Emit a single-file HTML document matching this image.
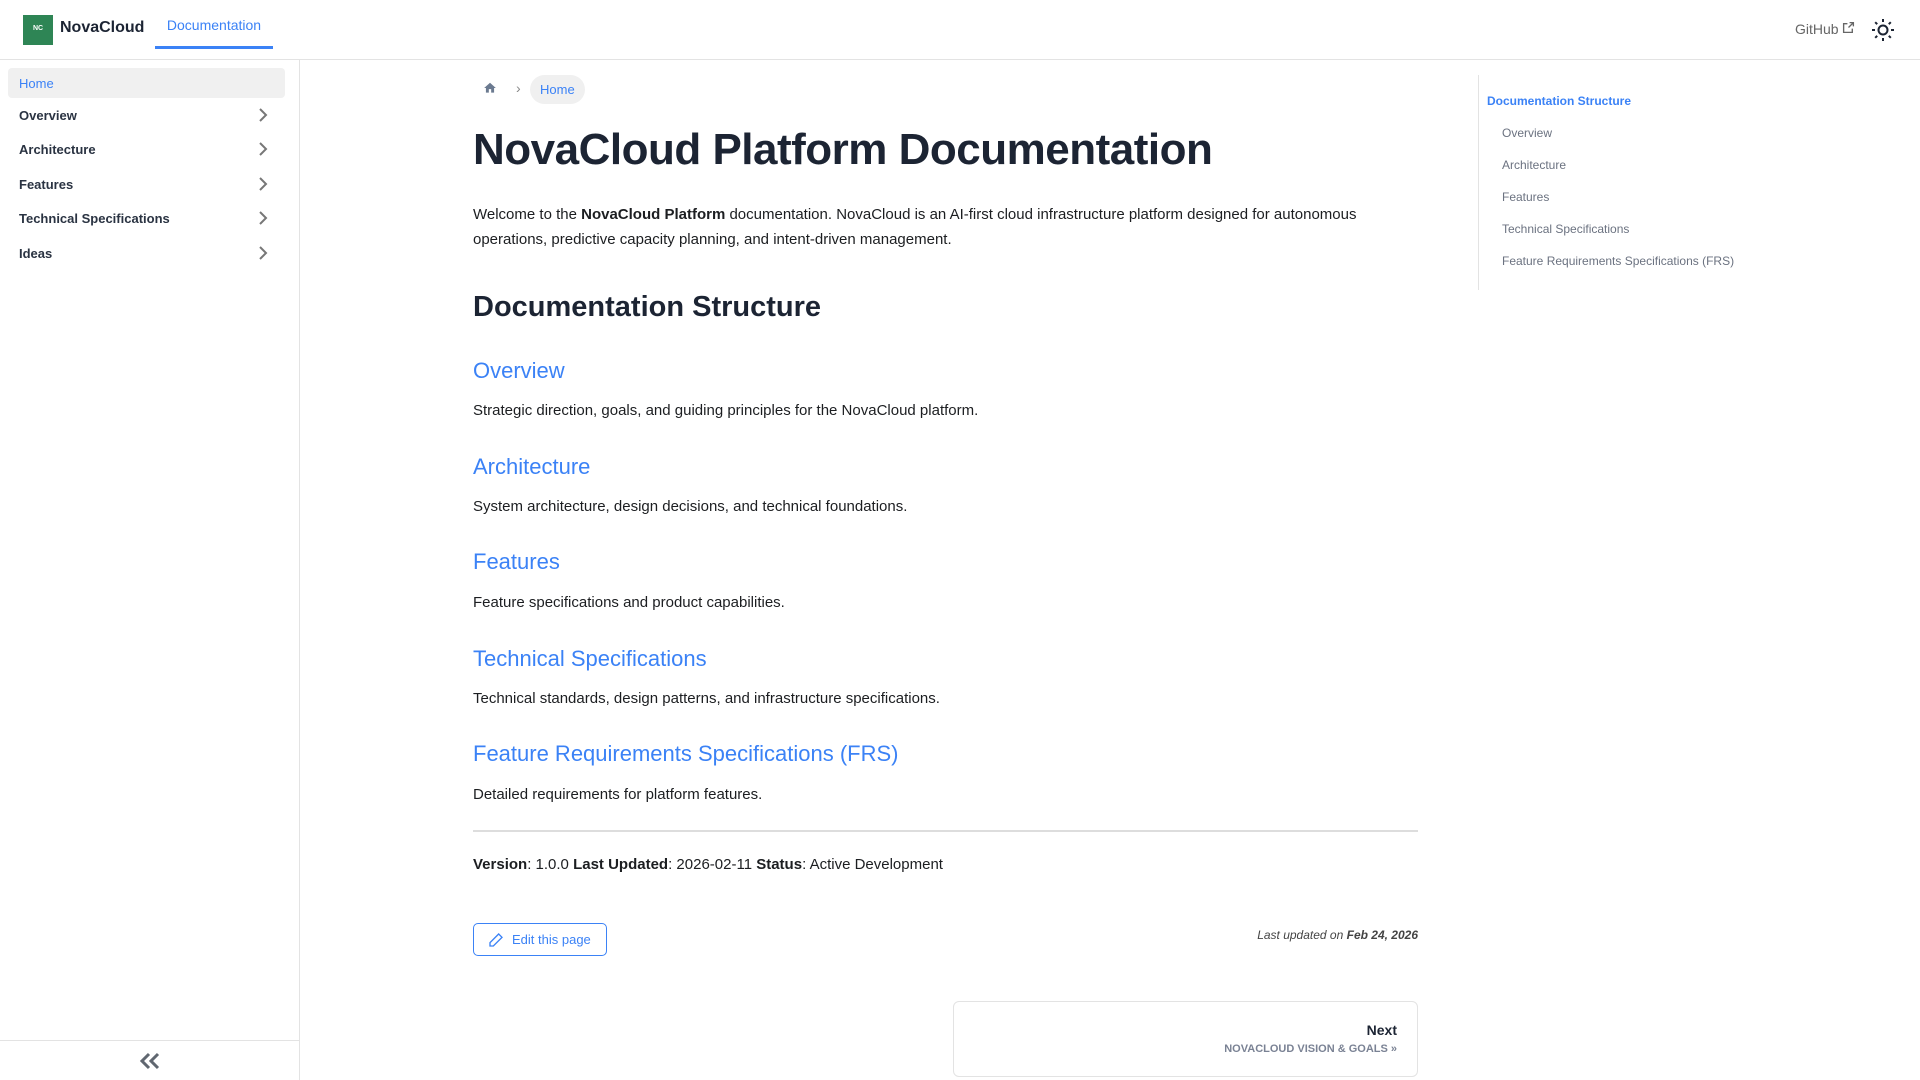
<!DOCTYPE html>
<html><head><meta charset="utf-8"><style>
*{box-sizing:border-box;margin:0;padding:0}
body{width:1920px;height:1080px;overflow:hidden;background:#fff;font-family:"Liberation Sans",sans-serif;color:#1c1e21;position:relative}
.hdr{position:absolute;left:0;top:0;width:1920px;height:60px;border-bottom:1px solid #e3e3e3}
.logo{position:absolute;left:23px;top:15px;width:30px;height:30px;background:#2e8555;color:#fff;font-size:7px;font-weight:bold;text-align:center;line-height:28px}
.brand{position:absolute;left:60px;top:19px;font-size:16px;font-weight:bold;color:#1c2433}
.tab{position:absolute;left:155px;top:0;width:118px;height:49px;border-bottom:3px solid #3b82f6;color:#3b82f6;font-size:14px;text-align:center;padding-top:17px}
.gh{position:absolute;left:1795px;top:21px;font-size:14px;color:#666}
.side{position:absolute;left:0;top:60px;width:300px;height:1020px;border-right:1px solid #e3e3e3}
.it{position:absolute;left:8px;width:277px;height:30px;font-size:13px;font-weight:bold;color:#2a3342;padding:8px 11px;border-radius:4px}
.it svg{position:absolute;right:14px;top:6px}
.col{position:absolute;left:0;bottom:0;width:300px;height:40px;border-top:1px solid #e3e3e3;border-right:1px solid #e3e3e3}
.m{position:absolute;left:473px;width:945px}
h1{font-size:44px;font-weight:bold;color:#1c2433;letter-spacing:-0.5px}
p{font-size:15px;line-height:25px;color:#1c1e21}
h2{font-size:29px;font-weight:bold;color:#1c2433}
h3{font-size:22px;font-weight:normal;color:#3b82f6}
.toc{position:absolute;left:1478px;top:75px;height:215px;border-left:1px solid #e3e3e3}
.toc div{position:absolute;white-space:nowrap;font-size:12px;color:#6b7280}
</style></head><body>
<div class="hdr">
<div class="logo">NC</div><div class="brand">NovaCloud</div>
<div class="tab">Documentation</div>
<div class="gh">GitHub <svg width="13" height="13" viewBox="0 0 24 24" fill="none" stroke="#666" stroke-width="2.5"><path d="M14 3h7v7M21 3l-9 9M19 14v7H3V5h7"/></svg></div>
<svg style="position:absolute;left:1871px;top:18px" width="24" height="24" viewBox="0 0 24 24" fill="none" stroke="#1c2433" stroke-width="2"><circle cx="12" cy="12" r="4.5"/><path d="M12 1v3M12 20v3M1 12h3M20 12h3M4.2 4.2l2 2M17.8 17.8l2 2M4.2 19.8l2-2M17.8 6.2l2-2"/></svg>
</div>
<div class="side">
<div class="it" style="top:8px;background:#f0f0f0;color:#3b82f6;font-weight:normal">Home</div>
<div class="it" style="top:40px">Overview<svg width="16" height="18" viewBox="0 0 16 18"><path d="M5 3l6 6-6 6" fill="none" stroke="#777" stroke-width="2"/></svg></div>
<div class="it" style="top:74px">Architecture<svg width="16" height="18" viewBox="0 0 16 18"><path d="M5 3l6 6-6 6" fill="none" stroke="#777" stroke-width="2"/></svg></div>
<div class="it" style="top:109px">Features<svg width="16" height="18" viewBox="0 0 16 18"><path d="M5 3l6 6-6 6" fill="none" stroke="#777" stroke-width="2"/></svg></div>
<div class="it" style="top:143px">Technical Specifications<svg width="16" height="18" viewBox="0 0 16 18"><path d="M5 3l6 6-6 6" fill="none" stroke="#777" stroke-width="2"/></svg></div>
<div class="it" style="top:178px">Ideas<svg width="16" height="18" viewBox="0 0 16 18"><path d="M5 3l6 6-6 6" fill="none" stroke="#777" stroke-width="2"/></svg></div>
<div class="col"><svg style="position:absolute;left:139px;top:10px" width="22" height="20" viewBox="0 0 22 20" fill="none" stroke="#606770" stroke-width="3"><path d="M10 3l-7 7 7 7M19 3l-7 7 7 7"/></svg></div>
</div>
<svg style="position:absolute;left:483px;top:81px" width="14" height="14" viewBox="0 0 24 24"><path d="M10 20v-6h4v6h5v-8h3L12 3 2 12h3v8z" fill="#6b7a90"/></svg>
<div style="position:absolute;left:516px;top:80px;color:#888;font-size:14px">›</div>
<div style="position:absolute;left:530px;top:75px;height:29px;padding:0 10px;border-radius:15px;background:#f0f0f0;color:#3b82f6;font-size:13px;line-height:29px">Home</div>
<h1 class="m" style="top:125px">NovaCloud Platform Documentation</h1>
<p class="m" style="top:202px">Welcome to the <b>NovaCloud Platform</b> documentation. NovaCloud is an AI-first cloud infrastructure platform designed for autonomous operations, predictive capacity planning, and intent-driven management.</p>
<h2 class="m" style="top:291px">Documentation Structure</h2>
<h3 class="m" style="top:358px">Overview</h3>
<p class="m" style="top:398px">Strategic direction, goals, and guiding principles for the NovaCloud platform.</p>
<h3 class="m" style="top:454px">Architecture</h3>
<p class="m" style="top:494px">System architecture, design decisions, and technical foundations.</p>
<h3 class="m" style="top:549px">Features</h3>
<p class="m" style="top:590px">Feature specifications and product capabilities.</p>
<h3 class="m" style="top:646px">Technical Specifications</h3>
<p class="m" style="top:686px">Technical standards, design patterns, and infrastructure specifications.</p>
<h3 class="m" style="top:741px">Feature Requirements Specifications (FRS)</h3>
<p class="m" style="top:782px">Detailed requirements for platform features.</p>
<div class="m" style="top:830px;border-top:2px solid #ddd"></div>
<p class="m" style="top:852px"><b>Version</b>: 1.0.0 <b>Last Updated</b>: 2026-02-11 <b>Status</b>: Active Development</p>
<div style="position:absolute;left:473px;top:923px;width:134px;height:33px;border:1px solid #3b82f6;border-radius:5px;color:#3b82f6;font-size:13px;line-height:31px;padding-left:38px"><svg style="position:absolute;left:14px;top:8px" width="16" height="16" viewBox="0 0 24 24" fill="none" stroke="#3b82f6" stroke-width="2"><path d="M16 3l5 5L8 21H3v-5z"/></svg>Edit this page</div>
<div style="position:absolute;right:502px;top:928px;font-size:12px;font-style:italic;color:#444">Last updated on <b>Feb 24, 2026</b></div>
<div style="position:absolute;left:953px;top:1001px;width:465px;height:76px;border:1px solid #e3e3e3;border-radius:6px;text-align:right;padding:20px 20px 0 0"><div style="font-size:14px;font-weight:bold;color:#1c2433">Next</div><div style="font-size:11px;font-weight:bold;color:#7a8294;margin-top:5px">NOVACLOUD VISION &amp; GOALS »</div></div>
<div class="toc">
<div style="left:8px;top:19px;color:#3b82f6;font-weight:bold">Documentation Structure</div>
<div style="left:23px;top:51px">Overview</div>
<div style="left:23px;top:83px">Architecture</div>
<div style="left:23px;top:115px">Features</div>
<div style="left:23px;top:147px">Technical Specifications</div>
<div style="left:23px;top:179px">Feature Requirements Specifications (FRS)</div>
</div>
</body></html>
